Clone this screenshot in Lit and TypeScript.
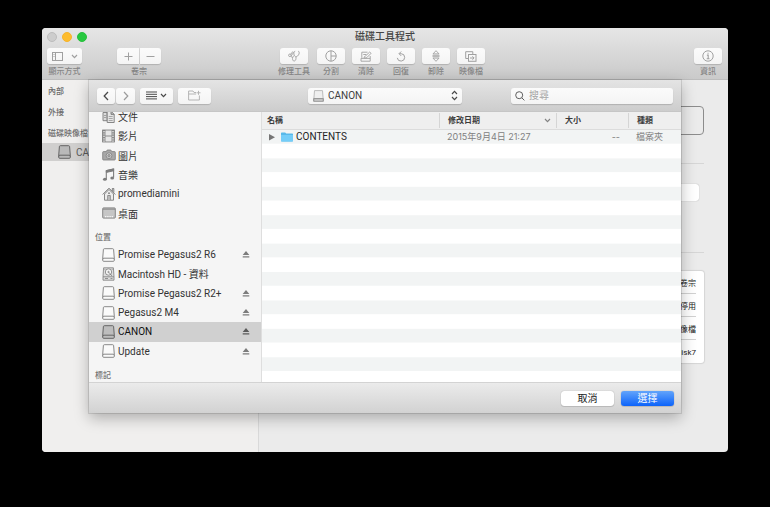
import { LitElement, html, css, svg, nothing } from "lit";
import type { SVGTemplateResult } from "lit";
import { customElement, property, state } from "lit/decorators.js";
import { classMap } from "lit/directives/class-map.js";

interface Glyph {
  w: number;
  h: number;
  body: SVGTemplateResult;
}

const glyphs: Record<string, Glyph> = {
  sidebar: {
    w: 11, h: 9,
    body: svg`<rect x=".5" y=".5" width="10" height="8"/><path d="M3.500 .5v8M1.500 2.500h1M1.500 4.500h1"/>`,
  },
  chevronDown: { w: 7, h: 5, body: svg`<path d="M1 1l2.500 2.600L6 1" stroke-width="1.200"/>` },
  plus: { w: 9, h: 9, body: svg`<path d="M4.500 .5v8M.5 4.500h8"/>` },
  minus: { w: 9, h: 9, body: svg`<path d="M.5 4.500h8"/>` },
  firstAid: {
    w: 12, h: 12,
    body: svg`<g stroke-width=".9"><path d="M7.200 1.200c-1.100 0-1.500 1.400-1.300 2.800.2 1.700 1 2.700 2 2.700S10.600 5.500 11 4c.4-1.500.2-2.700-.9-2.800"/><path d="M8 6.700v1.600c0 1.500-.7 2.700-1.900 2.700S4.500 9.800 4.500 8.500c0-1-.6-1.600-1.300-2.100"/><circle cx="1.900" cy="5.300" r="1.300"/><path d="M2.700 4.300L4.700 1.700 5.500 2.600 3 6M4.500 8l1-2.200"/></g>`,
  },
  partition: { w: 12, h: 12, body: svg`<circle cx="6" cy="6" r="5.200"/><path d="M6 .8v10.400M6 6h5.200"/>` },
  erase: {
    w: 12, h: 11,
    body: svg`<g stroke-width=".9"><path d="M7.500 1.200H1.800v5.600M10.200 5v5.200H1V7.400h9.200M3.300 3.500h3"/><path d="M4 6.700c.2-1 .7-1.600 1.600-1.800L9.600 1.100l1.500 1.200-4 4c-.9.700-2 .7-3.100.4z"/></g>`,
  },
  restore: {
    w: 10, h: 11,
    body: svg`<path d="M3.300 2.700h1.900a3.700 3.700 0 1 1-3.900 4.200M5.200 .5L3 2.700l2.200 2.200"/>`,
  },
  unmount: {
    w: 8, h: 12,
    body: svg`<g stroke-width=".9"><path d="M4 .7L7 3.900H1zM4 11.300L7 8.100H1z"/><path d="M.5 5.300h7M.5 6.700h7"/></g>`,
  },
  image: {
    w: 12, h: 11,
    body: svg`<path d="M3.500 7.500H.7V.7h7.100v2.800"/><rect x="3.500" y="3.500" width="7.500" height="6.800"/><path d="M5 7h4M7.400 5.300L9.100 7 7.400 8.700"/>`,
  },
  info: {
    w: 12, h: 12,
    body: svg`<circle cx="6" cy="6" r="5.200"/><path d="M4.900 5.100h1.300v3.600M4.700 8.700h2.800M5.500 3.200h1.100" stroke-width="1.100"/>`,
  },
  back: { w: 6, h: 10, body: svg`<path d="M5 1L1.200 5 5 9" stroke-width="1.300"/>` },
  forward: { w: 6, h: 10, body: svg`<path d="M1 1l3.800 4L1 9" stroke-width="1.200"/>` },
  list: { w: 11, h: 9, body: svg`<path d="M0 1h11M0 3.300h11M0 5.600h11M0 7.900h11"/>` },
  newFolder: {
    w: 13, h: 11,
    body: svg`<path d="M8 2.500H6L5 1H.6v9h10.800V5.500M.6 4h7.500M10.500 .8v4M8.500 2.800h4"/>`,
  },
  upDown: { w: 7, h: 11, body: svg`<path d="M1 4l2.500-2.700L6 4M1 7l2.500 2.700L6 7" stroke-width="1.200"/>` },
  search: { w: 10, h: 10, body: svg`<circle cx="4.200" cy="4.200" r="3.500"/><path d="M6.800 6.800L9.400 9.400"/>` },
  triangle: { w: 6, h: 8, body: svg`<path d="M0 1v6.500l6-3.200z" fill="currentColor" stroke="none"/>` },
  folder: {
    w: 12, h: 10,
    body: svg`<path d="M0 1.200Q0 .5.700.5h3.500l1 1h6.100q.7 0 .7.700v6.600q0 .7-.7.700H.7Q0 9.500 0 8.800z" fill="#58b9ea" stroke="none"/><path d="M0 3h12v5.800q0 .7-.7.700H.7Q0 9.500 0 8.800z" fill="#74cdf8" stroke="none"/>`,
  },
  eject: {
    w: 8, h: 7,
    body: svg`<path d="M4 0l3.300 4H.7zM.7 5.200h6.600v1.200H.7z" fill="currentColor" stroke="none"/>`,
  },
  drive: {
    w: 13, h: 14,
    body: svg`<path d="M2.400.7h8.200q.9 0 1 .9l.7 8.700v2q0 1-1 1H1.700q-1 0-1-1v-2l.7-8.700q.1-.9 1-.9z" fill="var(--drive-fill, #fafafa)" stroke-width=".9"/><path d="M.8 11.300q0-1.100 1.100-1.100h9.200q1.100 0 1.100 1.100" stroke-width=".9"/>`,
  },
  smallDrive: {
    w: 11, h: 12,
    body: svg`<path d="M1.500.6h8l.6 7.900H.9z" fill="#efefef" stroke="#bcbcbc"/><path d="M.6 8.500h9.800v2.800H.6z" fill="#a8a8a8" stroke="#999"/><path d="M1.500 10h8" stroke="#dedede"/>`,
  },
  hardDisk: {
    w: 13, h: 14,
    body: svg`<g stroke-width=".8"><path d="M1.600.8h9.800l.6 9v3.400H1V9.800z" fill="#dedede"/><circle cx="6.500" cy="5" r="3.200" fill="#f6f6f6"/><circle cx="6.500" cy="5" r=".7"/><path d="M1 9.800h11M7 5.500l3 3.500M3 11.500h3M8.500 11.500h2M2.500 2.300h.8M9.800 2.300h.8"/></g>`,
  },
  documents: {
    w: 13, h: 13,
    body: svg`<g stroke-width=".9"><path d="M5 2.500H1v8.200h4.200z" fill="#dcdcdc"/><path d="M5.200 1.200h4l3 3v8.300h-7z" fill="#e6e6e6"/><path d="M9 1.200v3.200h3.200" fill="#b5b5b5"/></g><path d="M2 5.500h2.200M2 7.500h2.200M6.700 6.500h4M6.700 8.500h4M6.700 10.500h4" stroke-width=".6"/>`,
  },
  film: {
    w: 13, h: 14,
    body: svg`<rect x=".6" y="1" width="11.800" height="12" fill="#8c8c8c" stroke-width=".8"/><path d="M3.500 1.500h6v5h-6zM3.500 7.500h6v5h-6z" fill="#e6e6e6" stroke="none"/><path d="M2 2v11M11 2v11" stroke="#f2f2f2" stroke-width="1.200" stroke-dasharray="1.200 1.200"/>`,
  },
  camera: {
    w: 14, h: 12,
    body: svg`<path d="M1.500 2.600h2.800L5.200 1h3.600l.9 1.600h2.800q.8 0 .8.800v6.800q0 .8-.8.800h-11q-.8 0-.8-.8V3.400q0-.8.8-.8z" fill="#a8a8a8" stroke-width=".8"/><circle cx="7" cy="6.700" r="2.900" fill="#d6d6d6" stroke-width=".8"/><circle cx="7" cy="6.700" r="1.300" fill="#a8a8a8" stroke-width=".6"/>`,
  },
  music: {
    w: 13, h: 14,
    body: svg`<path d="M4.300 11V2.600L11.600 1v8.500" stroke-width="1.100"/><path d="M4.300 2.600L11.600 1v1.800L4.300 4.400z" fill="currentColor"/><ellipse cx="2.900" cy="11.300" rx="1.900" ry="1.500" fill="currentColor" stroke="none"/><ellipse cx="10.200" cy="9.900" rx="1.900" ry="1.500" fill="currentColor" stroke="none"/>`,
  },
  home: {
    w: 14, h: 14,
    body: svg`<path d="M2.500 7v6.200h9V7L7 2.500z" fill="#ececec" stroke-width=".9"/><path d="M.7 7.500L7 1.200l6.300 6.300M10.300 4V1.500h1.500v4" stroke-width="1"/><path d="M5.700 13V8.500h2.600V13" fill="#c4c4c4" stroke-width=".8"/><circle cx="7" cy="6.200" r=".9" fill="currentColor" stroke="none"/>`,
  },
  desktop: {
    w: 14, h: 12,
    body: svg`<rect x=".7" y=".9" width="12.600" height="10.200" rx=".8" fill="#c6c6c6" stroke-width=".9"/><path d="M1 2.200h12" stroke-width=".8"/><path d="M3 9.700h8" stroke="#f6f6f6" stroke-width="1.300" stroke-dasharray="1.400 .8"/>`,
  },
};

const icon = (name: string) => {
  const g = glyphs[name];
  return html`<svg
    width=${g.w} height=${g.h} viewBox="0 0 ${g.w} ${g.h}"
    fill="none" stroke="currentColor" aria-hidden="true">${g.body}</svg>`;
};

const shared = css`
  * { box-sizing: border-box; }
  svg { display: block; flex: none; }
  button, input, select {
    margin: 0;
    padding: 0;
    border: 0;
    font: inherit;
    color: inherit;
    outline: none;
  }
  ul { list-style: none; margin: 0; padding: 0; }
  .key {
    display: flex;
    flex: none;
    align-items: center;
    justify-content: center;
    height: 16px;
    border-radius: 3px;
    background: linear-gradient(#fbfbfb, #f4f4f4);
    box-shadow: 0 1px 1px #00000028;
  }
`;

interface Place {
  label: string;
  icon: string;
  eject?: boolean;
}

const favourites: Place[] = [
  { label: "文件", icon: "documents" },
  { label: "影片", icon: "film" },
  { label: "圖片", icon: "camera" },
  { label: "音樂", icon: "music" },
  { label: "promediamini", icon: "home" },
  { label: "桌面", icon: "desktop" },
];

const locations: Place[] = [
  { label: "Promise Pegasus2 R6", icon: "drive", eject: true },
  { label: "Macintosh HD - 資料", icon: "hardDisk" },
  { label: "Promise Pegasus2 R2+", icon: "drive", eject: true },
  { label: "Pegasus2 M4", icon: "drive", eject: true },
  { label: "CANON", icon: "drive", eject: true },
  { label: "Update", icon: "drive", eject: true },
];

@customElement("window-toolbar")
class WindowToolbar extends LitElement {
  static styles = [
    shared,
    css`
      :host {
        display: block;
        height: 52px;
        border-bottom: 1px solid #bdbdbd;
        background: linear-gradient(#e6e6e6, #cacaca);
      }
      .title-row {
        display: grid;
        grid-template-columns: 1fr auto 1fr;
        align-items: center;
        height: 17px;
        padding: 0 5px;
      }
      .lights { display: flex; gap: 5px; }
      .light {
        width: 10px;
        height: 10px;
        border-radius: 50%;
        border: 1px solid #bcbcbc;
        background: #cdcdcd;
      }
      .light.min { background: #fdbc2e; border-color: #f6b32c; }
      .light.max { background: #28c840; border-color: #27c03d; }
      h1 { margin: 0; font-size: 10px; line-height: 16px; font-weight: 500; color: #444; }
      .tools { display: flex; padding: 3px 6px 0 5px; color: #a0a0a0; }
      .item { display: flex; flex-direction: column; align-items: center; }
      .item .label {
        font-size: 8px;
        line-height: 15px;
        font-weight: 500;
        color: #858585;
        white-space: nowrap;
      }
      .key { width: 28px; }
      .view { width: 35px; gap: 8px; }
      .volume { margin-left: 35px; }
      .pair { display: flex; gap: 1px; }
      .pair .key { width: 22px; }
      .pair .key:first-child { border-radius: 3px 0 0 3px; }
      .pair .key:last-child { width: 21px; border-radius: 0 3px 3px 0; }
      .actions { display: flex; gap: 7px; margin-left: 117px; }
      .info { margin-left: auto; }
    `,
  ];

  private actions = [
    ["修理工具", "firstAid"],
    ["分割", "partition"],
    ["清除", "erase"],
    ["回復", "restore"],
    ["卸除", "unmount"],
    ["映像檔", "image"],
  ];

  private item(label: string, name: string, extra = "") {
    return html`<div class="item ${extra}">
      <button class="key" aria-label=${label}>${icon(name)}</button>
      <span class="label">${label}</span>
    </div>`;
  }

  render() {
    return html`
      <div class="title-row">
        <div class="lights">
          <button class="light" aria-label="關閉"></button>
          <button class="light min" aria-label="縮到最小"></button>
          <button class="light max" aria-label="縮放"></button>
        </div>
        <h1>磁碟工具程式</h1>
      </div>
      <div class="tools">
        <div class="item">
          <button class="key view" aria-label="顯示方式">${icon("sidebar")}${icon("chevronDown")}</button>
          <span class="label">顯示方式</span>
        </div>
        <div class="item volume">
          <div class="pair">
            <button class="key" aria-label="加入卷宗">${icon("plus")}</button>
            <button class="key" aria-label="刪除卷宗">${icon("minus")}</button>
          </div>
          <span class="label">卷宗</span>
        </div>
        <div class="actions">${this.actions.map(([l, n]) => this.item(l, n))}</div>
        ${this.item("資訊", "info", "info")}
      </div>
    `;
  }
}

@customElement("place-list")
class PlaceList extends LitElement {
  @property({ attribute: false }) places: Place[] = [];
  @property() selected = "";

  static styles = [
    shared,
    css`
      :host { display: block; }
      ul { display: grid; grid-auto-rows: 1fr; height: 116px; }
      li {
        display: flex;
        align-items: center;
        padding: 0 11px 0 13px;
        color: #7c7c7c;
        --drive-fill: #fafafa;
      }
      li.on { background: #d0d0d0; color: #5a5a5a; --drive-fill: #bdbdbd; }
      .pic { display: flex; justify-content: center; width: 13px; margin-right: 3px; }
      .name { flex: 1; color: #333; white-space: nowrap; }
      .on .name { color: #111; }
      button { background: none; }
    `,
  ];

  render() {
    return html`<ul>
      ${this.places.map(
        (p) => html`<li class=${classMap({ on: p.label === this.selected })}>
          <span class="pic">${icon(p.icon)}</span>
          <span class="name">${p.label}</span>
          ${p.eject ? html`<button aria-label="退出 ${p.label}">${icon("eject")}</button>` : nothing}
        </li>`
      )}
    </ul>`;
  }
}

@customElement("open-sheet")
class OpenSheet extends LitElement {
  @state() private place = "CANON";

  static styles = [
    shared,
    css`
      :host {
        display: block;
        background: #f5f5f5;
        box-shadow: 0 0 0 1px #0000001c, 0 5px 14px #00000048;
        font-size: 10px;
      }
      .bar {
        display: flex;
        align-items: center;
        height: 32px;
        padding: 0 8px;
        background: linear-gradient(#e4e4e4, #cdcdcd);
        border-bottom: 1px solid #c6c6c6;
        color: #4a4a4a;
      }
      .nav { display: flex; gap: 1px; }
      .nav .key { width: 18px; }
      .nav .key:last-child { width: 19px; color: #9c9c9c; }
      .wide { width: 33px; gap: 3px; margin-left: 5px; }
      .wide.new { color: #b4b4b4; }
      .popup {
        width: 154px;
        margin-left: 97px;
        padding: 0 4px 0 5px;
        gap: 4px;
      }
      select { flex: 1; min-width: 0; appearance: none; background: none; color: #404040; }
      .search {
        flex: 1;
        min-width: 0;
        justify-content: flex-start;
        gap: 4px;
        margin-left: 49px;
        padding: 0 4px;
        color: #5e5e5e;
      }
      input { flex: 1; min-width: 0; background: none; }
      input::placeholder { color: #a6a6a6; opacity: 1; }
      .main { display: grid; grid-template-columns: 173px 1fr; height: 270px; }
      .side { border-right: 1px solid #dedede; overflow: hidden; }
      .side place-list.scrolled { margin-top: -5px; }
      h2 {
        height: 22px;
        margin: 0;
        padding: 6px 6px 0;
        font-size: 8px;
        line-height: 17px;
        font-weight: 500;
        color: #727272;
      }
      .files {
        overflow: hidden;
        background: linear-gradient(#f2f4f4 50%, #fff 50%) 0 18px / 100% calc(100% * 2 / 19);
      }
      table { width: 100%; border-collapse: collapse; table-layout: fixed; white-space: nowrap; }
      th {
        height: 17px;
        padding: 0 8px;
        border-bottom: 1px solid #dcdcdc;
        background: #efefef;
        text-align: left;
        font-size: 8px;
        line-height: 15px;
        font-weight: 600;
        color: #3c3c3c;
      }
      th:first-child { padding-left: 5px; }
      .head { display: flex; align-items: center; justify-content: space-between; }
      th + th .head { margin-left: -8px; padding-left: 8px; border-left: 1px solid #d5d5d5; }
      th .head svg { color: #848484; margin-right: -3px; }
      .c-date { width: 117px; }
      .c-size { width: 72px; }
      .c-kind { width: 53px; }
      td {
        height: 16px;
        padding: 0 8px;
        font-family: Inter, "Noto Sans CJK TC", sans-serif;
        font-size: 9px;
        line-height: 14px;
        color: #808080;
      }
      td.size { text-align: right; }
      td.name { padding-left: 7px; font-family: inherit; font-size: 10px; color: #242424; }
      .entry { display: flex; align-items: center; }
      .entry button { background: none; color: #757575; margin-right: 6px; }
      .entry span { margin-left: 3px; }
      .foot {
        display: flex;
        justify-content: flex-end;
        align-items: center;
        gap: 7px;
        height: 31px;
        padding: 0 7px;
        border-top: 1px solid #d3d3d3;
        background: linear-gradient(#ebebeb, #d2d2d2);
      }
      .foot button {
        width: 53px;
        height: 15px;
        border-radius: 3px;
        background: #fff;
        box-shadow: 0 0 1px #00000066, 0 1px 1px #0000001c;
        line-height: 15px;
        color: #222;
      }
      .foot button.go { background: linear-gradient(#62a4fb, #0c63fa); color: #fff; }
    `,
  ];

  render() {
    return html`
      <div class="bar">
        <div class="nav">
          <button class="key" aria-label="返回">${icon("back")}</button>
          <button class="key" aria-label="往前">${icon("forward")}</button>
        </div>
        <button class="key wide" aria-label="列表">${icon("list")}${icon("chevronDown")}</button>
        <button class="key wide new" aria-label="新增檔案夾">${icon("newFolder")}</button>
        <label class="key popup">
          ${icon("smallDrive")}
          <select aria-label="位置"><option>${this.place}</option></select>
          ${icon("upDown")}
        </label>
        <label class="key search">
          ${icon("search")}
          <input type="search" placeholder="搜尋" aria-label="搜尋" />
        </label>
      </div>
      <div class="main">
        <nav class="side">
          <place-list class="scrolled" .places=${favourites}></place-list>
          <h2>位置</h2>
          <place-list .places=${locations} .selected=${this.place}></place-list>
          <h2>標記</h2>
        </nav>
        <div class="files">
          <table>
            <colgroup>
              <col /><col class="c-date" /><col class="c-size" /><col class="c-kind" />
            </colgroup>
            <thead>
              <tr>
                <th><div class="head">名稱</div></th>
                <th><div class="head">修改日期${icon("chevronDown")}</div></th>
                <th><div class="head">大小</div></th>
                <th><div class="head">種類</div></th>
              </tr>
            </thead>
            <tbody>
              <tr>
                <td class="name">
                  <div class="entry">
                    <button aria-label="展開">${icon("triangle")}</button>
                    ${icon("folder")}<span>CONTENTS</span>
                  </div>
                </td>
                <td>2015年9月4日 21:27</td>
                <td class="size">--</td>
                <td>檔案夾</td>
              </tr>
            </tbody>
          </table>
        </div>
      </div>
      <div class="foot">
        <button>取消</button>
        <button class="go">選擇</button>
      </div>
    `;
  }
}

@customElement("app-root")
class AppRoot extends LitElement {
  static styles = [
    shared,
    css`
      :host {
        display: flex;
        flex-direction: column;
        box-sizing: border-box;
        min-height: 100vh;
        padding: 28px 42px 55px;
        background: #000;
        font-family: Roboto, "Noto Sans CJK TC", sans-serif;
        font-size: 10px;
      }
      .window {
        position: relative;
        flex: 1;
        display: flex;
        flex-direction: column;
        border-radius: 4px;
        overflow: hidden;
        background: #ebebeb;
      }
      .body { flex: 1; display: grid; grid-template-columns: 217px 1fr; }
      .devices { border-right: 1px solid #d9d9d9; background: #f0efee; }
      .devices h2 {
        margin: 0;
        padding: 0 6px;
        height: 21px;
        font-size: 8px;
        line-height: 24px;
        font-weight: 500;
        color: #6c6c6c;
      }
      .device {
        display: flex;
        align-items: center;
        gap: 5px;
        height: 18px;
        padding-left: 16px;
        background: #d0cfce;
        color: #5a5a5a;
        --drive-fill: #b9b9b9;
      }
      .pane { padding: 26px 24px 0; }
      .usage { height: 29px; border: 1px solid #8c8c8c; border-radius: 4px; }
      .rule { height: 1px; background: #d6d6d6; }
      .usage + .rule { margin: 28px 0 20px; }
      .field { height: 17px; margin-right: 5px; border-radius: 3px; background: #fff; box-shadow: 0 0 1px #00000060; }
      .field + .rule { margin: 51px 0 18px; }
      .facts {
        padding: 0 8px;
        border-radius: 3px;
        background: #fff;
        box-shadow: 0 0 1px 1px #00000018;
        font-size: 8px;
        text-align: right;
        color: #222;
      }
      .facts li { height: 23px; line-height: 26px; border-bottom: 1px solid #d2d2d2; }
      .facts li:last-child { border-bottom: 0; }
      open-sheet { position: absolute; top: 52px; left: 47px; right: 47px; }
    `,
  ];

  render() {
    return html`
      <main class="window">
        <window-toolbar></window-toolbar>
        <div class="body">
          <aside class="devices">
            <h2>內部</h2>
            <h2>外接</h2>
            <h2>磁碟映像檔</h2>
            <div class="device">${icon("drive")}<span>CANON</span></div>
          </aside>
          <section class="pane">
            <div class="usage"></div>
            <div class="rule"></div>
            <div class="field"></div>
            <div class="rule"></div>
            <ul class="facts">
              <li>卷宗</li>
              <li>停用</li>
              <li>磁碟映像檔</li>
              <li>disk7</li>
            </ul>
          </section>
        </div>
        <open-sheet></open-sheet>
      </main>
    `;
  }
}
